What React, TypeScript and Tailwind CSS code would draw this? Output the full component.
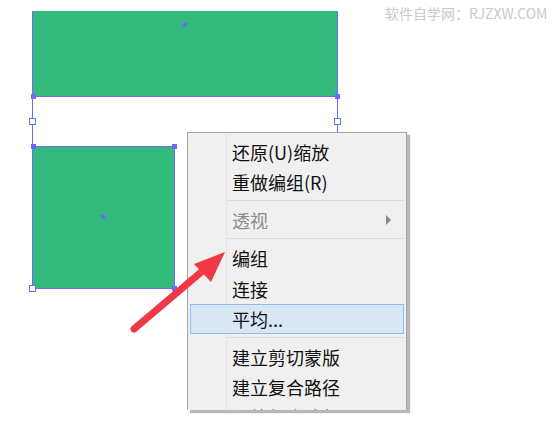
import React from 'react';

const font = { fontFamily: '"Noto Sans CJK SC", "Noto Sans", sans-serif' };

function Handle({ x, y, hollow = false }: { x: number; y: number; hollow?: boolean }) {
  // handles are centred on the given point
  return hollow ? (
    <div
      className="absolute w-[7px] h-[7px] bg-white border border-[#6b6bff]"
      style={{ left: x - 3, top: y - 3 }}
    />
  ) : (
    <div className="absolute w-[5px] h-[5px] bg-[#6b6bff]" style={{ left: x - 2, top: y - 2 }} />
  );
}

type Item = { label: string; disabled?: boolean; submenu?: boolean; active?: boolean; h?: string } | 'sep';

const items: Item[] = [
  { label: '还原(U)缩放' },
  { label: '重做编组(R)' },
  'sep',
  { label: '透视', disabled: true, submenu: true },
  'sep',
  { label: '编组' },
  { label: '连接', h: 'h-[31px]' },
  { label: '平均...', active: true },
  'sep',
  { label: '建立剪切蒙版' },
  { label: '建立复合路径' },
  { label: '释放复合路径' },
];

function ContextMenu() {
  return (
    <div
      className="absolute left-[187px] top-[132px] w-[220px] h-[278px] overflow-hidden bg-[#f0f0f0] border-t border-x border-[#a5a5a5] shadow-[3px_3px_1px_rgba(0,0,0,0.28)]"
      style={font}
    >
      {/* icon gutter line */}
      <div className="absolute left-[38px] top-0 bottom-0 w-px bg-[#e2e2e2]" />
      <div className="relative flex flex-col pt-[4px]">
        {items.map((it, i) =>
          it === 'sep' ? (
            <div key={i} className="ml-[39px] mr-[2px] mt-[3px] mb-[4px] h-px bg-[#d9d9d9]" />
          ) : (
            <div
              key={i}
              className={`flex items-center text-[18px] leading-none ${it.h ?? 'h-[30px]'} ${
                it.active
                  ? 'mx-[2px] pl-[41px] bg-[#d8e6f5] border border-[#8fbcec]'
                  : 'pl-[44px]'
              } ${it.disabled ? 'text-[#8c8c8c]' : 'text-[#111]'}`}
            >
              <span className="flex-1">{it.label}</span>
              {it.submenu && (
                <svg width="6" height="10" viewBox="0 0 6 10" className="mr-[14px]">
                  <polygon points="0,0 5,5 0,10" fill="#8a8a8a" />
                </svg>
              )}
            </div>
          )
        )}
      </div>
    </div>
  );
}

export default function App() {
  return (
    <div className="relative w-[558px] h-[429px] bg-white overflow-hidden">
      {/* watermark */}
      <div className="absolute left-[385px] top-[3px] text-[14px] text-[#cacaca]" style={font}>
        软件自学网：RJZXW.COM
      </div>

      {/* top rectangle */}
      <div className="absolute left-[32px] top-[11px] w-[306px] h-[86px] bg-[#33ba7c] border-x border-b border-[#6b6bff]" />
      {/* bottom square */}
      <div className="absolute left-[32px] top-[146px] w-[143px] h-[143px] bg-[#33ba7c] border border-[#6b6bff]" />

      {/* selection box sides */}
      <div className="absolute left-[32px] top-[96px] w-px h-[50px] bg-[#6b6bff]" />
      <div className="absolute left-[337px] top-[96px] w-px h-[40px] bg-[#6b6bff]" />

      <Handle x={33} y={96} />
      <Handle x={337} y={96} />
      <Handle x={32} y={121} hollow />
      <Handle x={337} y={121} hollow />
      <Handle x={33} y={146} />
      <Handle x={174} y={146} />
      <Handle x={174} y={288} />
      <Handle x={32} y={288} hollow />
      <div className="absolute left-[183px] top-[23px] w-[4px] h-[4px] bg-[#6b6bff]" />
      <div className="absolute left-[101px] top-[215px] w-[4px] h-[4px] bg-[#6b6bff]" />

      <ContextMenu />

      {/* red arrow */}
      <svg className="absolute inset-0 pointer-events-none" width="558" height="429">
        <line x1="134" y1="329" x2="206" y2="268" stroke="#ef3a45" strokeWidth="7" strokeLinecap="round" />
        <polygon points="225,252 194,264 211,282" fill="#ef3a45" />
      </svg>
    </div>
  );
}
